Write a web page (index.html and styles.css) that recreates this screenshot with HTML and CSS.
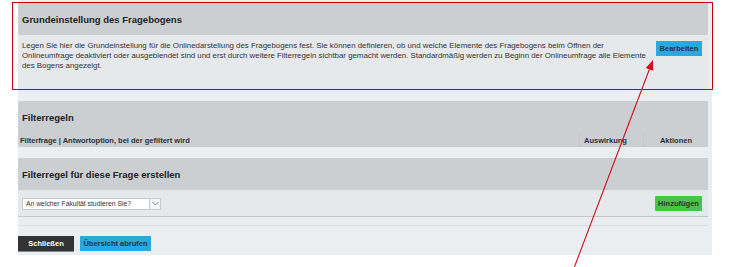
FILE: index.html
```html
<!DOCTYPE html>
<html lang="de">
<head>
    <meta charset="UTF-8">
    <title>Filterregeln</title>
    <link rel="stylesheet" href="styles.css">
</head>
<body>
    <div class="page">
        <div class="panel highlighted">
            <div class="panel-header">Grundeinstellung des Fragebogens</div>
            <div class="panel-body intro">
                <button class="btn btn-blue btn-float">Bearbeiten</button>
                <p>Legen Sie hier die Grundeinstellung für die Onlinedarstellung des Fragebogens fest. Sie können definieren, ob und welche Elemente des Fragebogens beim Öffnen der<br>Onlineumfrage deaktiviert oder ausgeblendet sind und erst durch weitere Filterregeln sichtbar gemacht werden. Standardmäßig werden zu Beginn der Onlineumfrage alle Elemente des Bogens angezeigt.</p>
            </div>
        </div>

        <div class="panel">
            <div class="panel-header">Filterregeln</div>
            <div class="columns">
                <div class="col col-main">Filterfrage | Antwortoption, bei der gefiltert wird</div>
                <div class="col col-effect">Auswirkung</div>
                <div class="col col-actions">Aktionen</div>
            </div>
        </div>

        <div class="panel">
            <div class="panel-header">Filterregel für diese Frage erstellen</div>
            <div class="panel-body create-row">
                <div class="select-box">
                    <span class="select-text">An welcher Fakultät studieren Sie?</span>
                    <span class="select-arrow">
                        <svg width="7" height="5" viewBox="0 0 7 5"><path d="M0.5 1 L3.5 4 L6.5 1" fill="none" stroke="#777" stroke-width="0.9"/></svg>
                    </span>
                </div>
                <button class="btn btn-green">Hinzufügen</button>
            </div>
        </div>

        <div class="spacer-line"></div>

        <div class="footer">
            <button class="btn btn-dark">Schließen</button>
            <button class="btn btn-blue">Übersicht abrufen</button>
        </div>
    </div>

    <!-- Markierung: Pfeil auf "Bearbeiten" -->
    <svg class="annotation" width="741" height="267" viewBox="0 0 741 267">
        <line x1="574" y1="268" x2="649.4" y2="69.3" stroke="#d0101e" stroke-width="1.1"/>
        <polygon points="653,60 653.2,70.8 645.7,67.9" fill="#d0101e"/>
    </svg>
</body>
</html>
```

FILE: styles.css
```css
* {
    margin: 0;
    padding: 0;
    box-sizing: border-box;
}

body {
    background-color: #ffffff;
    font-family: "Liberation Sans", Arial, sans-serif;
    color: #333333;
    position: relative;
    width: 741px;
    height: 267px;
    overflow: hidden;
}

.page {
    margin-left: 18px;
    width: 694px;
    padding: 3px 4px 2px 0;
    background-color: #ebeef0;
}

.panel {
    margin-bottom: 12px;
}

.panel:nth-child(2) {
    margin-bottom: 11px;
}

.panel-header {
    height: 32px;
    background-color: #cbcfd2;
    padding-left: 4px;
    display: flex;
    align-items: center;
    font-size: 9.5px;
    font-weight: bold;
    color: #222222;
}

.panel-body {
    background-color: #e6e9eb;
}

.highlighted {
    position: relative;
}

.highlighted::after {
    content: "";
    position: absolute;
    left: -6px;
    top: -1.5px;
    right: -5px;
    bottom: -1px;
    border: 1.5px solid #c4000f;
    pointer-events: none;
}

.intro {
    padding: 6px 6px 18px 4px;
    min-height: 54px;
    font-size: 7.85px;
    line-height: 10px;
    box-shadow: 0 1px 1px rgba(0, 0, 0, 0.12);
}

.btn {
    border: none;
    font-family: "Liberation Sans", Arial, sans-serif;
    font-size: 7.5px;
    font-weight: bold;
    height: 15px;
    padding: 0 4px;
    cursor: pointer;
}

.btn-float {
    float: right;
    margin-left: 0;
    width: 46px;
    padding: 0;
}

.btn-blue {
    background-color: #2aa9dd;
    color: #1b3548;
}

.btn-green {
    background-color: #4cc24c;
    color: #243a24;
    width: 47px;
    padding: 0;
    border-radius: 1px;
}

.btn-dark {
    background-color: #333333;
    color: #ffffff;
    width: 56px;
    box-shadow: 0 1px 0 #888888;
}

.columns {
    display: flex;
    height: 14px;
    background-color: #cbcfd2;
    font-size: 7.5px;
    font-weight: bold;
    color: #2a2f36;
}

.col {
    display: flex;
    align-items: center;
}

.col-main {
    flex: 1;
    padding-left: 2px;
}

.col-effect {
    width: 64px;
    padding-left: 4px;
    border-left: 1px solid #c4c8cb;
}

.col-actions {
    width: 65px;
    justify-content: center;
    border-left: 1px solid #c4c8cb;
}

.create-row {
    height: 27px;
    display: flex;
    align-items: center;
    justify-content: space-between;
    padding: 0 6px 0 4px;
    border-bottom: 1px solid #c3c7c9;
}

.panel:nth-child(3) {
    margin-bottom: 0;
}

.select-box {
    width: 139px;
    height: 12px;
    display: flex;
    background-color: #ffffff;
    border: 1px solid #c7cacc;
    font-size: 6.8px;
    color: #333333;
    margin-top: 1px;
}

.select-text {
    flex: 1;
    padding-left: 3px;
    line-height: 10px;
}

.select-arrow {
    width: 11px;
    border-left: 1px solid #c7cacc;
    background-color: #f4f5f6;
    display: flex;
    align-items: center;
    justify-content: center;
}

.spacer-line {
    height: 1px;
    margin-top: 8px;
    background-color: #dcdfe1;
}

.footer {
    display: flex;
    gap: 6px;
    padding-top: 10px;
    padding-bottom: 2px;
}

.footer .btn-blue {
    width: 71px;
    padding: 0;
}

.annotation {
    position: absolute;
    left: 0;
    top: 0;
    pointer-events: none;
}
```
